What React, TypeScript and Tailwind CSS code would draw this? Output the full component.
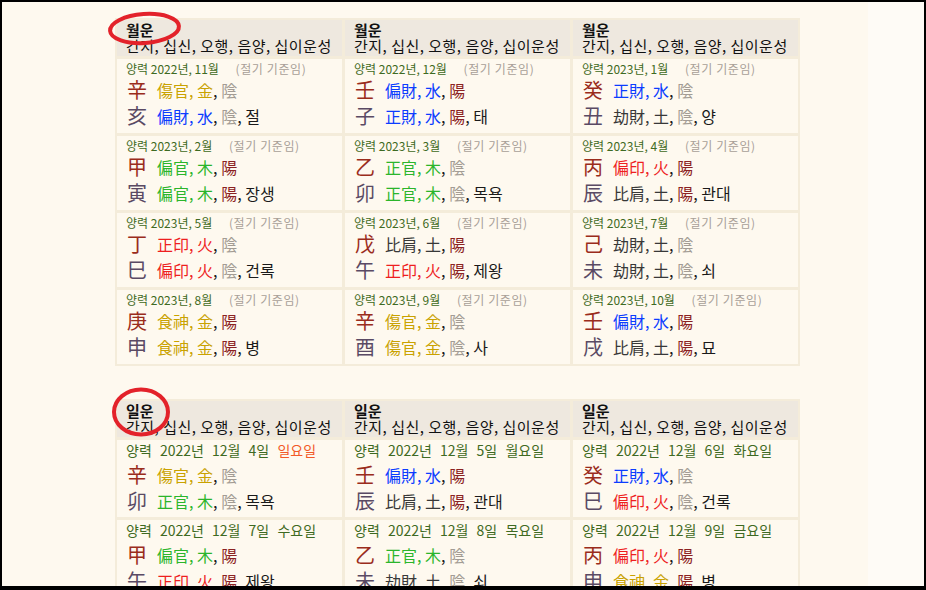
import React from "react";

type Kind = "sik" | "jae" | "gwan" | "in" | "bi";
type Attr = { ss: string; el: string; yy: "陰" | "陽"; kind: Kind; un?: string };

const kindColor: Record<Kind, string> = {
  sik: "text-[#c9a200]",
  jae: "text-[#0b3cff]",
  gwan: "text-[#2bb52b]",
  in: "text-[#ee1f1f]",
  bi: "text-[#383838]",
};

function AttrText({ a }: { a: Attr }) {
  const c = kindColor[a.kind];
  return (
    <span className="text-[16px] leading-[20px] text-[#1a1a1a] whitespace-nowrap">
      <span className={c}>{a.ss}, </span>
      <span className={c}>{a.el}</span>,{" "}
      <span className={a.yy === "陰" ? "text-[#a39c94]" : "text-[#8b2222]"}>{a.yy}</span>
      {a.un ? <>, {a.un}</> : null}
    </span>
  );
}

type CellData = {
  date: React.ReactNode;
  stem: string;
  s: Attr;
  branch: string;
  b: Attr;
};

const A = (ss: string, el: string, yy: "陰" | "陽", kind: Kind, un?: string): Attr => ({ ss, el, yy, kind, un });

function MonthDate({ y, m }: { y: string; m: string }) {
  return (
    <span className="text-[12px] leading-[16px] text-[#3e6a22] whitespace-nowrap">
      양력 {y}년, {m}월 <span className="ml-[14px] text-[#a8a098] tracking-[0.6px]">(절기 기준임)</span>
    </span>
  );
}

function DayDate({ d, w, sun }: { d: string; w: string; sun?: boolean }) {
  return (
    <span className="text-[14px] leading-[16px] text-[#3e6a22] whitespace-nowrap [word-spacing:5px]">
      양력 2022년 12월 {d}일 <span className={sun ? "text-[#f25a28]" : ""}>{w}</span>
    </span>
  );
}

function Cell({ c, day }: { c: CellData; day?: boolean }) {
  return (
    <div className={`bg-[#fef9ef] pl-[9px] pt-[2px] ${day ? "pb-[3px]" : "pb-[4px]"}`}>
      <div className={`h-[16px] flex items-center ${day ? "mb-[4px]" : ""}`}>{c.date}</div>
      <div className="h-[26px] flex items-center">
        <span className="w-[31px] shrink-0 text-[20px] leading-none text-[#9a2c1c] pl-[1px]">{c.stem}</span>
        <AttrText a={c.s} />
      </div>
      <div className="h-[26px] flex items-center">
        <span className="w-[31px] shrink-0 text-[20px] leading-none text-[#5a4a64] pl-[1px]">{c.branch}</span>
        <AttrText a={c.b} />
      </div>
    </div>
  );
}

function Header({ title }: { title: string }) {
  return (
    <div className="h-[36px] bg-[#eee8df] pl-[9px] pt-[2px] text-[15px] leading-[16px] text-[#111]">
      <div className="font-bold h-[16px]">{title}</div>
      <div className="whitespace-nowrap tracking-[0.5px] h-[16px]">간지, 십신, 오행, 음양, 십이운성</div>
    </div>
  );
}

const monthCells: CellData[] = [
  { date: <MonthDate y="2022" m="11" />, stem: "辛", s: A("傷官", "金", "陰", "sik"), branch: "亥", b: A("偏財", "水", "陰", "jae", "절") },
  { date: <MonthDate y="2022" m="12" />, stem: "壬", s: A("偏財", "水", "陽", "jae"), branch: "子", b: A("正財", "水", "陽", "jae", "태") },
  { date: <MonthDate y="2023" m="1" />, stem: "癸", s: A("正財", "水", "陰", "jae"), branch: "丑", b: A("劫財", "土", "陰", "bi", "양") },
  { date: <MonthDate y="2023" m="2" />, stem: "甲", s: A("偏官", "木", "陽", "gwan"), branch: "寅", b: A("偏官", "木", "陽", "gwan", "장생") },
  { date: <MonthDate y="2023" m="3" />, stem: "乙", s: A("正官", "木", "陰", "gwan"), branch: "卯", b: A("正官", "木", "陰", "gwan", "목욕") },
  { date: <MonthDate y="2023" m="4" />, stem: "丙", s: A("偏印", "火", "陽", "in"), branch: "辰", b: A("比肩", "土", "陽", "bi", "관대") },
  { date: <MonthDate y="2023" m="5" />, stem: "丁", s: A("正印", "火", "陰", "in"), branch: "巳", b: A("偏印", "火", "陰", "in", "건록") },
  { date: <MonthDate y="2023" m="6" />, stem: "戊", s: A("比肩", "土", "陽", "bi"), branch: "午", b: A("正印", "火", "陽", "in", "제왕") },
  { date: <MonthDate y="2023" m="7" />, stem: "己", s: A("劫財", "土", "陰", "bi"), branch: "未", b: A("劫財", "土", "陰", "bi", "쇠") },
  { date: <MonthDate y="2023" m="8" />, stem: "庚", s: A("食神", "金", "陽", "sik"), branch: "申", b: A("食神", "金", "陽", "sik", "병") },
  { date: <MonthDate y="2023" m="9" />, stem: "辛", s: A("傷官", "金", "陰", "sik"), branch: "酉", b: A("傷官", "金", "陰", "sik", "사") },
  { date: <MonthDate y="2023" m="10" />, stem: "壬", s: A("偏財", "水", "陽", "jae"), branch: "戌", b: A("比肩", "土", "陽", "bi", "묘") },
];

const dayCells: CellData[] = [
  { date: <DayDate d="4" w="일요일" sun />, stem: "辛", s: A("傷官", "金", "陰", "sik"), branch: "卯", b: A("正官", "木", "陰", "gwan", "목욕") },
  { date: <DayDate d="5" w="월요일" />, stem: "壬", s: A("偏財", "水", "陽", "jae"), branch: "辰", b: A("比肩", "土", "陽", "bi", "관대") },
  { date: <DayDate d="6" w="화요일" />, stem: "癸", s: A("正財", "水", "陰", "jae"), branch: "巳", b: A("偏印", "火", "陰", "in", "건록") },
  { date: <DayDate d="7" w="수요일" />, stem: "甲", s: A("偏官", "木", "陽", "gwan"), branch: "午", b: A("正印", "火", "陽", "in", "제왕") },
  { date: <DayDate d="8" w="목요일" />, stem: "乙", s: A("正官", "木", "陰", "gwan"), branch: "未", b: A("劫財", "土", "陰", "bi", "쇠") },
  { date: <DayDate d="9" w="금요일" />, stem: "丙", s: A("偏印", "火", "陽", "in"), branch: "申", b: A("食神", "金", "陽", "sik", "병") },
];

function Table({ title, cells, day }: { title: string; cells: CellData[]; day?: boolean }) {
  return (
    <div className="w-[685px] grid grid-cols-3 gap-[3px] p-[2px] bg-[#f4ecda]">
      <Header title={title} />
      <Header title={title} />
      <Header title={title} />
      {cells.map((c, i) => (
        <Cell key={i} c={c} day={day} />
      ))}
    </div>
  );
}

export default function App() {
  return (
    <div
      className="relative w-[926px] h-[590px] overflow-hidden bg-black pt-[2px] pl-[2px] pr-[2px] pb-[4px]"
      style={{ fontFamily: '"Noto Sans CJK KR", "Noto Sans", sans-serif' }}
    >
      <div className="flex h-full overflow-hidden">
        <div className="w-[866px] shrink-0 bg-[#fef9ef] pl-[113px] pt-[16px]">
          <Table title="월운" cells={monthCells} />
          <div className="h-[33px]" />
          <Table title="일운" cells={dayCells} day />
        </div>
        <div className="flex-1 bg-[#fefbf6]" />
      </div>
      <svg className="absolute left-0 top-0 pointer-events-none" width="926" height="590">
        <ellipse cx="144.5" cy="28.5" rx="34.5" ry="14.5" fill="none" stroke="#e3222a" strokeWidth="4" transform="rotate(-4 144.5 28.5)" />
        <ellipse cx="141" cy="412" rx="27" ry="22.5" fill="none" stroke="#e3222a" strokeWidth="4" />
      </svg>
    </div>
  );
}
